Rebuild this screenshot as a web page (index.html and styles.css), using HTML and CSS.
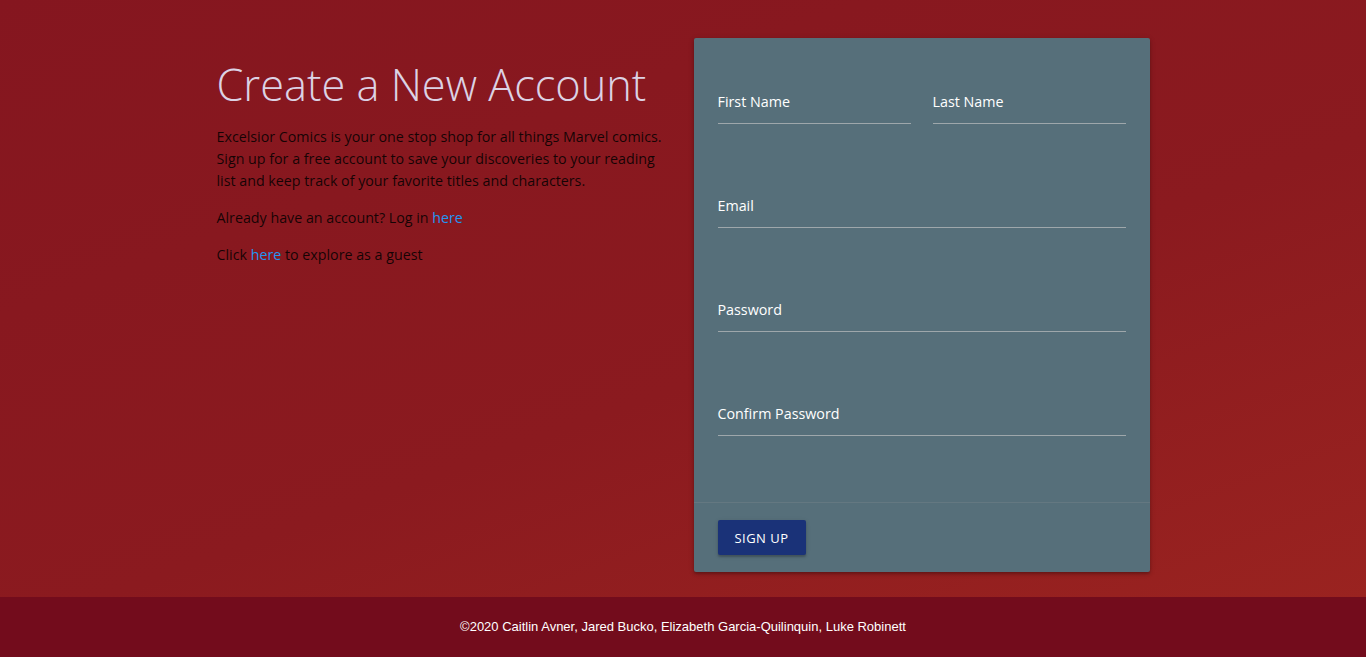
FILE: index.html
```html
<!DOCTYPE html>
<html lang="en">
<head>
<meta charset="utf-8">
<title>Create a New Account</title>
<link rel="stylesheet" href="styles.css">
</head>
<body>
<main class="page">
  <div class="container">
    <section class="intro">
      <h1 class="title">Create a New Account</h1>
      <p class="text">Excelsior Comics is your one stop shop for all things Marvel comics. Sign up for a free account to save your discoveries to your reading list and keep track of your favorite titles and characters.</p>
      <p class="text">Already have an account? Log in <a class="link" href="#">here</a></p>
      <p class="text">Click <a class="link" href="#">here</a> to explore as a guest</p>
    </section>
    <form class="card">
      <div class="card-body">
        <div class="row">
          <label class="field"><span class="label">First Name</span></label>
          <label class="field"><span class="label">Last Name</span></label>
        </div>
        <label class="field"><span class="label">Email</span></label>
        <label class="field"><span class="label">Password</span></label>
        <label class="field"><span class="label">Confirm Password</span></label>
      </div>
      <div class="card-action">
        <button class="btn" type="button">Sign Up</button>
      </div>
    </form>
  </div>
</main>
<footer class="footer">©2020 Caitlin Avner, Jared Bucko, Elizabeth Garcia-Quilinquin, Luke Robinett</footer>
</body>
</html>
```
FILE: styles.css
```css
* { box-sizing: border-box; }
html, body { margin: 0; padding: 0; }
body {
  font-family: "Open Sans", "Noto Sans", sans-serif;
  height: 657px;
  display: flex;
  flex-direction: column;
  background: linear-gradient(160deg, #85161f 0%, #8b1a1f 55%, #9c2420 100%);
}
.page {
  flex: 1;
  padding-top: 38px;
}
.container {
  width: 933px;
  margin: 0 auto;
  display: grid;
  grid-template-columns: 456px 456px;
  column-gap: 21px;
}
.title {
  margin: 22px 0 16px;
  font-weight: 300;
  font-size: 43.3px;
  line-height: 50px;
  color: #dcd2e4;
  letter-spacing: 0;
  white-space: nowrap;
}
.text {
  margin: 0 0 15px;
  font-size: 14.25px;
  line-height: 22px;
  color: rgba(0, 0, 0, 0.85);
}
.link { color: #2196f3; text-decoration: none; }
.card {
  background: #566f7a;
  border-radius: 2px;
  box-shadow: 0 2px 3px rgba(0, 0, 0, 0.25), 0 1px 6px rgba(0, 0, 0, 0.12);
  align-self: start;
}
.card-body {
  padding: 24px 24px 24px;
}
.row {
  display: grid;
  grid-template-columns: 1fr 1fr;
  column-gap: 22px;
}
.field {
  display: flex;
  flex-direction: column;
  justify-content: flex-end;
  height: 62px;
  margin-bottom: 42px;
  padding-bottom: 10px;
  border-bottom: 1px solid #9ea7ab;
}
.label {
  font-size: 14.3px;
  line-height: 22px;
  color: #ffffff;
}
.card-action {
  border-top: 1px solid rgba(160, 160, 160, 0.2);
  padding: 17px 24px 17px;
}
.btn {
  display: block;
  height: 35px;
  width: 88px;
  border: none;
  border-radius: 2px;
  background: #1a3278;
  color: #fff;
  font-family: "Open Sans", "Noto Sans", sans-serif;
  font-size: 13px;
  letter-spacing: 0.5px;
  text-transform: uppercase;
  box-shadow: 0 2px 2px rgba(0, 0, 0, 0.2), 0 1px 5px rgba(0, 0, 0, 0.12);
}
.footer {
  height: 60px;
  padding-bottom: 1px;
  background: #730c1c;
  color: #ffffff;
  font-family: "Liberation Sans", Arial, sans-serif;
  font-size: 13px;
  display: flex;
  align-items: center;
  justify-content: center;
}
```
